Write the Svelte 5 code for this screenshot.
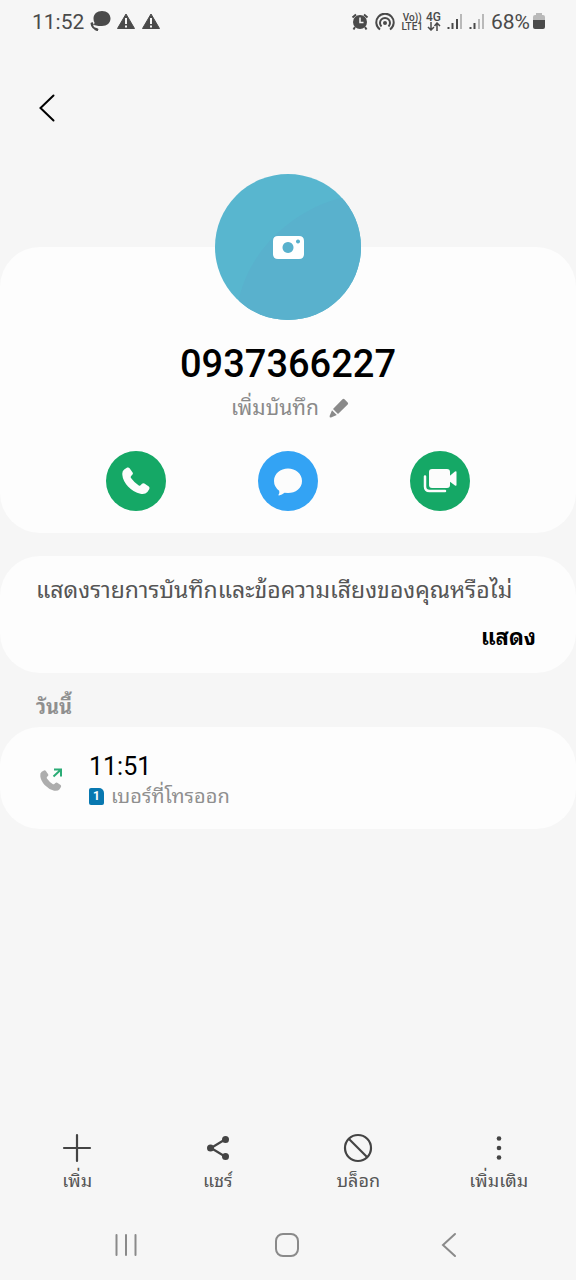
<script lang="ts">
	const number = '0937366227';

	const handset =
		'M2.2 2.4 5.2 0.6Q6.6 0 7.6 1.2L10.6 5.4Q11.4 6.8 10.2 7.8L9 9.2Q8.4 10 9 11 12.200 15.600 16.800 18.400 17.800 19 18.600 18.200L20 16.800Q21.200 15.800 22.400 16.600L26.800 19.600Q28 20.800 27.200 22.200L25.400 25Q23 27.800 18.400 26.800 11.600 25.200 6 19.400 0.800 13.600 0.400 8.200 -0.200 4 2.200 2.400Z';

	let calls = $state([{ time: '11:51', sim: 1, label: 'เบอร์ที่โทรออก' }]);

	const tools = [
		{ id: 'add', label: 'เพิ่ม' },
		{ id: 'share', label: 'แชร์' },
		{ id: 'block', label: 'บล็อก' },
		{ id: 'more', label: 'เพิ่มเติม' }
	];
</script>

<div class="screen">
	<div class="statusbar">
		<div class="status-left">
			<span class="clock">11:52</span>
			<svg width="22" height="22" viewBox="0 0 22 22">
				<path d="M13 0C18 0 21.500 3 21.500 7.500S18 15 13 15H9.500L5 14 5.500 11.500Q4.500 10 4.500 7.500C4.500 3 8 0 13 0Z" fill="#4a4a4a" />
				<path d="M2.500 12.500Q3 17.500 9 19" fill="none" stroke="#4a4a4a" stroke-width="2" />
				<path d="M1.500 12l2-1 1.500 3-2 1zM6.500 16.500l3 1.500-1 2-3-1z" fill="#4a4a4a" />
			</svg>
			{#each [1, 2] as n (n)}
				<svg width="20" height="22" viewBox="0 0 20 22">
					<path d="M10 3 18.500 17.500H1.500Z" fill="#4a4a4a" stroke="#4a4a4a" stroke-linejoin="round" />
					<path d="M10 7v6M10 14.500v2" stroke="#f6f6f6" stroke-width="2" />
				</svg>
			{/each}
		</div>
		<div class="status-right">
			<svg width="18" height="18" viewBox="0 0 18 18">
				<circle cx="9" cy="9" r="7" fill="#4a4a4a" />
				<path d="M9 4.500v5h3.500" fill="none" stroke="#f6f6f6" stroke-width="1.500" />
				<path d="M1.500 4.500 5 1.500M16.500 4.500 13 1.500M4 14 2.500 16.500M14 14 15.500 16.500" stroke="#4a4a4a" stroke-width="2" />
			</svg>
			<svg width="20" height="18" viewBox="0 0 20 18">
				<g fill="none" stroke="#4a4a4a" stroke-width="2">
					<path d="M5 16.500A8.700 8.700 0 1 1 15 16.500" />
					<path d="M6.500 13.500A5 5 0 1 1 13.500 13.500" />
				</g>
				<circle cx="10" cy="10" r="2" fill="#4a4a4a" />
			</svg>
			<span class="nets">
				<span class="net"><span>Vo))</span><span>LTE1</span></span>
				<span class="net four">
					<span>4G</span>
					<svg width="14" height="9" viewBox="0 0 14 9">
						<path d="M4 0v7.500M1 5 4 8 7 5M10 9V1M7.500 4 10 1l3 3" fill="none" stroke="#4a4a4a" stroke-width="1.500" />
					</svg>
				</span>
			</span>
			<svg width="16" height="18" viewBox="0 0 16 18">
				<path d="M1.500 14v2M5.500 10v6M10 6v10" stroke="#4a4a4a" stroke-width="2" />
				<path d="M14 1v15" stroke="#b9b9b9" stroke-width="2" />
			</svg>
			<svg width="16" height="18" viewBox="0 0 16 18">
				<path d="M1.500 14v2M5.500 10v6" stroke="#4a4a4a" stroke-width="2" />
				<path d="M10 6v10M14 1v15" stroke="#b9b9b9" stroke-width="2" />
			</svg>
			<span class="battery">
				68%
				<svg width="12" height="18" viewBox="0 0 12 18">
					<path d="M3 0h6v2h1q2 0 2 2v4H0V4q0-2 2-2h1z" fill="#b9b9b9" />
					<path d="M0 7h12v7q0 2-2 2H2q-2 0-2-2z" fill="#4a4a4a" />
				</svg>
			</span>
		</div>
	</div>

	<header>
		<button class="back" aria-label="Back">
			<svg width="18" height="30" viewBox="0 0 18 30">
				<path d="M15.500 2.500 2.500 15 15.500 27.500" fill="none" stroke="#000" stroke-width="2" stroke-linecap="round" />
			</svg>
		</button>
	</header>

	<main>
		<section class="card profile">
			<button class="avatar" aria-label="Photo">
				<svg viewBox="0 0 146 146">
					<defs>
						<clipPath id="disc"><circle cx="73" cy="73" r="73" /></clipPath>
					</defs>
					<g clip-path="url(#disc)">
						<rect width="146" height="146" fill="#58b6cf" />
						<path d="M23 130C32 78 76 38 122 25L146 20V146H20Z" fill="#59b1cd" />
					</g>
					<path fill-rule="evenodd" fill="#fff" d="M63 62H84Q89 62 89 67V80Q89 85 84 85H63Q58 85 58 80V67Q58 62 63 62ZM73 68a5.500 5.500 0 1 0 .01 0ZM83 65.500a2 2 0 1 0 .01 0Z" />
				</svg>
			</button>
			<h1>{number}</h1>
			<button class="note">
				<span>เพิ่มบันทึก</span>
				<svg width="20" height="20" viewBox="0 0 20 20" fill="#8a8a8a">
					<path d="M13.500 1.300Q14.500.4 15.500 1.300L18.700 4.500Q19.600 5.500 18.700 6.500L9 16 4 11ZM3 12.200 7.800 17 2 19.500Q.4 19.800.6 18Z" />
				</svg>
			</button>
			<div class="actions">
				<button class="round green" aria-label="Call">
					<svg width="28" height="28" viewBox="0 0 28 28"><path d={handset} fill="#fcfcfc" /></svg>
				</button>
				<button class="round blue" aria-label="Message">
					<svg width="30" height="30" viewBox="0 0 30 30">
						<path d="M15 2.500C22.500 2.500 29 7.500 29 15S22.500 27 15 27L11.500 26.800Q9 28.800 6 29.500 5 29.500 5.600 28.500 6.800 27 6.200 24.700 1 21 1 15C1 7.500 7.500 2.500 15 2.500Z" fill="#fcfcfc" />
					</svg>
				</button>
				<button class="round green" aria-label="Video call">
					<svg width="34" height="28" viewBox="0 0 34 28">
						<rect x="6" y="2" width="21" height="19" rx="3" fill="#fcfcfc" />
						<path d="M26 9.500 32 4.500Q33.500 3.800 33.500 5V18Q33.500 19.200 32 18.500L26 14Z" fill="#fcfcfc" />
						<path d="M2 9.500V19.500Q2 24 6.500 24H22" fill="none" stroke="#fcfcfc" stroke-width="2.500" stroke-linecap="round" />
					</svg>
				</button>
			</div>
		</section>

		<section class="card prompt">
			<p>แสดงรายการบันทึกและข้อความเสียงของคุณหรือไม่</p>
			<button class="show">แสดง</button>
		</section>

		<h2>วันนี้</h2>
		<ul class="card log">
			{#each calls as call (call.time)}
				<li>
					<svg width="24" height="24" viewBox="0 0 24 24">
						<path d={handset} fill="#adadad" transform="translate(1 2) scale(.77)" />
						<path d="M14.500 8.500 22 1.500M15 1.500h7v7" fill="none" stroke="#2bac76" stroke-width="2" />
					</svg>
					<div class="entry">
						<span class="time">{call.time}</span>
						<span class="kind"><span class="sim">{call.sim}</span>{call.label}</span>
					</div>
				</li>
			{/each}
		</ul>
	</main>

	<nav class="toolbar">
		{#each tools as tool (tool.id)}
			<button>
				<svg width="30" height="30" viewBox="0 0 30 30" fill="none" stroke="#444" stroke-width="2.200" stroke-linecap="round">
					{#if tool.id === 'add'}
						<path d="M15 2v26M2 15h26" />
					{:else if tool.id === 'share'}
						<path d="M22 6.500 8 15l14 8.500" />
						<g fill="#444" stroke="none">
							<circle cx="22.500" cy="6.500" r="3.500" />
							<circle cx="7.500" cy="15" r="3.500" />
							<circle cx="22.500" cy="23.500" r="3.500" />
						</g>
					{:else if tool.id === 'block'}
						<circle cx="15" cy="15" r="13" />
						<path d="M6 6 24 24" />
					{:else}
						<g fill="#444" stroke="none">
							<circle cx="15" cy="5.500" r="2.300" />
							<circle cx="15" cy="15" r="2.300" />
							<circle cx="15" cy="24.500" r="2.300" />
						</g>
					{/if}
				</svg>
				<span>{tool.label}</span>
			</button>
		{/each}
	</nav>

	<div class="sysnav">
		<button aria-label="Recents">
			<svg width="26" height="26" viewBox="0 0 26 26">
				<path d="M3.500 3v20M13 3v20M22.500 3v20" stroke="#8a8a8a" stroke-width="2" stroke-linecap="round" />
			</svg>
		</button>
		<button aria-label="Home">
			<svg width="26" height="26" viewBox="0 0 26 26">
				<rect x="1" y="2" width="22" height="22" rx="7" fill="none" stroke="#8a8a8a" stroke-width="2" />
			</svg>
		</button>
		<button aria-label="Back">
			<svg width="26" height="26" viewBox="0 0 26 26">
				<path d="M18 2 6 13 18 24" fill="none" stroke="#8a8a8a" stroke-width="2" stroke-linecap="round" />
			</svg>
		</button>
	</div>
</div>

<style>
	:global(body) {
		margin: 0;
		background: #f6f6f6;
	}

	.screen {
		display: flex;
		flex-direction: column;
		min-height: 100vh;
		font-family: Roboto, 'Noto Sans Thai Looped', 'Noto Sans Thai', 'Noto Sans', sans-serif;
		color: #000;
	}

	svg {
		display: block;
		flex: none;
	}

	button {
		padding: 0;
		border: 0;
		background: none;
		font: inherit;
		color: inherit;
		cursor: pointer;
	}

	.statusbar {
		display: flex;
		align-items: center;
		justify-content: space-between;
		height: 44px;
		padding: 0 31px 0 32px;
		color: #4a4a4a;
	}

	.status-left,
	.status-right {
		display: flex;
		align-items: center;
		gap: 5px;
	}

	.status-right {
		gap: 6px;
	}

	.clock,
	.battery {
		font-size: 21px;
		line-height: 24px;
	}

	.battery {
		display: flex;
		align-items: center;
		gap: 3px;
	}

	.nets {
		display: flex;
		gap: 3px;
	}

	.net {
		display: flex;
		flex-direction: column;
		align-items: center;
		font-size: 10px;
		line-height: 9px;
		font-weight: 500;
	}

	.four {
		font-size: 12px;
	}

	header {
		display: flex;
		align-items: center;
		height: 128px;
		padding: 0 38px;
	}

	main {
		flex: 1;
	}

	.card {
		background: #fdfdfd;
		border-radius: 40px;
	}

	.profile {
		display: flex;
		flex-direction: column;
		align-items: center;
		margin-top: 75px;
		padding-bottom: 22px;
	}

	.avatar {
		width: 146px;
		height: 146px;
		margin-top: -73px;
		border-radius: 50%;
	}

	h1 {
		margin: 20px 0 0;
		font-size: 38px;
		line-height: 48px;
		font-weight: 500;
	}

	.note {
		display: flex;
		align-items: center;
		gap: 10px;
		margin-top: 4px;
		padding-left: 4px;
		font-size: 21px;
		line-height: 32px;
		color: #8a8a8a;
	}

	.actions {
		display: flex;
		justify-content: space-around;
		align-self: stretch;
		margin-top: 27px;
		padding: 0 60px;
	}

	.round {
		display: grid;
		place-items: center;
		width: 60px;
		height: 60px;
		border-radius: 50%;
	}

	.green {
		background: #15a866;
	}

	.blue {
		background: #33a3f4;
	}

	.prompt {
		display: flex;
		flex-direction: column;
		margin-top: 23px;
		padding: 18px 40px 18px 36px;
	}

	.prompt p {
		margin: 0;
		font-size: 23px;
		line-height: 34px;
		color: #555;
	}

	.show {
		align-self: flex-end;
		margin-top: 13px;
		font-size: 22px;
		line-height: 34px;
		font-weight: 700;
	}

	h2 {
		margin: 0;
		padding: 19px 36px 5px;
		font-size: 20px;
		line-height: 30px;
		font-weight: 700;
		color: #8f8f8f;
	}

	.log {
		margin: 0;
		padding: 0;
		list-style: none;
	}

	.log li {
		display: flex;
		align-items: center;
		gap: 26px;
		padding: 24px 39px 20px;
	}

	.entry {
		display: flex;
		flex-direction: column;
	}

	.time {
		font-size: 25px;
		line-height: 32px;
	}

	.kind {
		display: flex;
		align-items: center;
		gap: 7px;
		font-size: 20px;
		line-height: 26px;
		color: #8f8f8f;
	}

	.sim {
		width: 15px;
		height: 17px;
		border-radius: 2px 5px 2px 2px;
		background: #0878b0;
		color: #fff;
		font-size: 12px;
		line-height: 17px;
		font-weight: 700;
		text-align: center;
	}

	.toolbar {
		display: flex;
		justify-content: space-between;
		padding: 0 7px;
	}

	.toolbar button {
		display: flex;
		flex: 1;
		flex-direction: column;
		align-items: center;
		gap: 4px;
		font-size: 18px;
		line-height: 28px;
		color: #555;
	}

	.sysnav {
		display: flex;
		justify-content: space-around;
		align-items: center;
		height: 70px;
		margin-top: 15px;
		padding: 0 45px;
	}
</style>
